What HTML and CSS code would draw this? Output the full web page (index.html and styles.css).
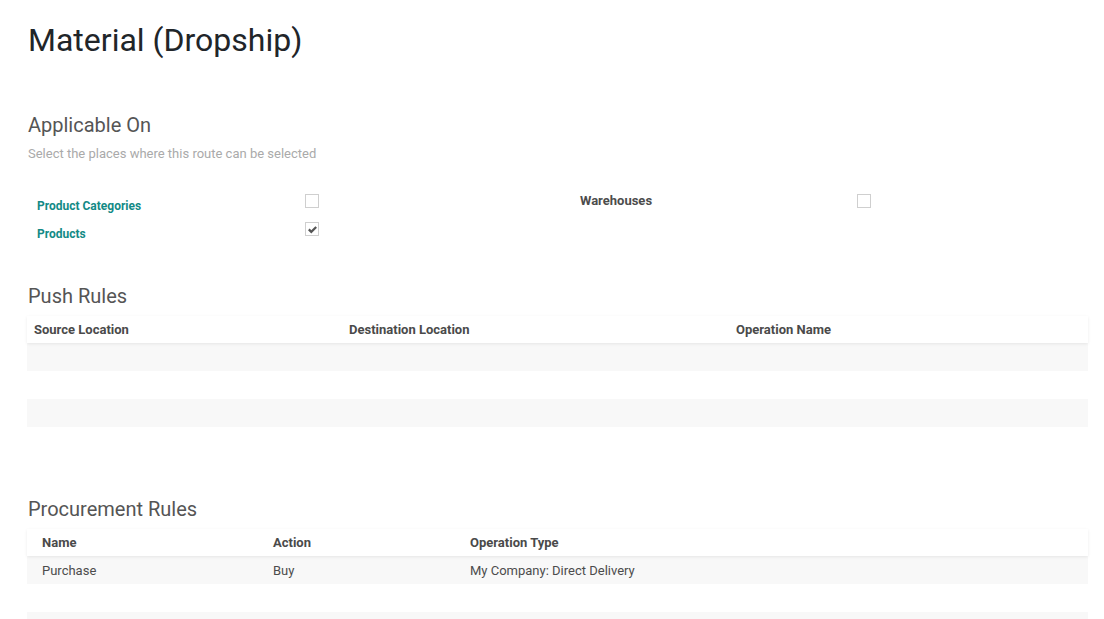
FILE: index.html
```html
<!DOCTYPE html>
<html>
<head>
<meta charset="utf-8">
<link rel="stylesheet" href="styles.css">
</head>
<body>
<div class="sheet">
  <h1 class="title">Material (Dropship)</h1>

  <section class="applicable">
    <h2 class="sec-title">Applicable On</h2>
    <div class="sec-sub">Select the places where this route can be selected</div>
    <div class="form-grid">
      <div class="lbl lbl-link">Product Categories</div>
      <div class="val"><span class="cb"></span></div>
      <div class="lbl lbl-plain">Warehouses</div>
      <div class="val"><span class="cb"></span></div>
      <div class="lbl lbl-link">Products</div>
      <div class="val"><span class="cb checked"><svg viewBox="0 0 13 13" width="13" height="13"><path d="M2.8 6.4 L5.3 8.9 L10.2 4" fill="none" stroke="#555" stroke-width="2.2"/></svg></span></div>
      <div></div>
      <div></div>
    </div>
  </section>

  <section class="push">
    <h2 class="sec-title">Push Rules</h2>
    <div class="table push-table">
      <div class="row head">
        <div class="cell">Source Location</div>
        <div class="cell">Destination Location</div>
        <div class="cell">Operation Name</div>
      </div>
      <div class="row grey"></div>
      <div class="row"></div>
      <div class="row grey"></div>
    </div>
  </section>

  <section class="proc">
    <h2 class="sec-title">Procurement Rules</h2>
    <div class="table proc-table">
      <div class="row head">
        <div class="cell">Name</div>
        <div class="cell">Action</div>
        <div class="cell">Operation Type</div>
      </div>
      <div class="row grey">
        <div class="cell">Purchase</div>
        <div class="cell">Buy</div>
        <div class="cell">My Company: Direct Delivery</div>
      </div>
      <div class="row"></div>
      <div class="row grey"></div>
    </div>
  </section>
</div>
</body>
</html>
```
FILE: styles.css
```css
html, body {
  margin: 0;
  padding: 0;
  background: #ffffff;
}
body {
  font-family: Roboto, "Liberation Sans", sans-serif;
  color: #4c4c4c;
  overflow: hidden;
  height: 619px;
}
.sheet {
  padding: 20px 16px 0 27px;
}
.title {
  margin: 0 0 0 1px;
  font-size: 32px;
  font-weight: 400;
  line-height: 40px;
  color: #212529;
}
.sec-title {
  margin: 0 0 0 1px;
  font-size: 20px;
  font-weight: 400;
  line-height: 24px;
  color: #555555;
}
.applicable {
  margin-top: 53px;
}
.sec-sub {
  margin: 8px 0 0 1px;
  font-size: 13px;
  line-height: 18px;
  color: #aaaaaa;
}
.form-grid {
  margin-top: 31px;
  padding-left: 10px;
  display: grid;
  grid-template-columns: 268px 275px 277px 1fr;
  grid-auto-rows: 28px;
}
.lbl {
  font-size: 12px;
  font-weight: 700;
  line-height: 14px;
}
.lbl-link {
  color: #138a86;
  padding-top: 5px;
}
.lbl-plain {
  font-size: 13px;
  color: #4c4c4c;
  padding-top: 0px;
}
.cb {
  display: block;
  box-sizing: border-box;
  width: 14px;
  height: 14px;
  border: 1px solid #cfcfcf;
  background: #fff;
  position: relative;
}
.cb svg {
  position: absolute;
  left: 0;
  top: 0;
}
.push {
  margin-top: 34px;
}
.proc {
  margin-top: 70px;
}
.table {
  margin-top: 8px;
}
.row {
  display: grid;
  height: 28px;
  align-items: center;
}
.push-table .row {
  grid-template-columns: 315px 387px 1fr;
}
.proc-table .row {
  grid-template-columns: 231px 197px 1fr;
}
.push-table .cell {
  padding-left: 7px;
}
.proc-table .cell {
  padding-left: 15px;
}
.row.head {
  height: 27px;
  position: relative;
  z-index: 1;
  box-shadow: 0 1px 3px rgba(0, 0, 0, 0.08);
  background: #fff;
}
.head .cell {
  font-size: 13px;
  font-weight: 700;
  color: #4a4a4a;
}
.cell {
  font-size: 13px;
  color: #4c4c4c;
  white-space: nowrap;
}
.row.grey {
  background: #f8f8f8;
}
```
